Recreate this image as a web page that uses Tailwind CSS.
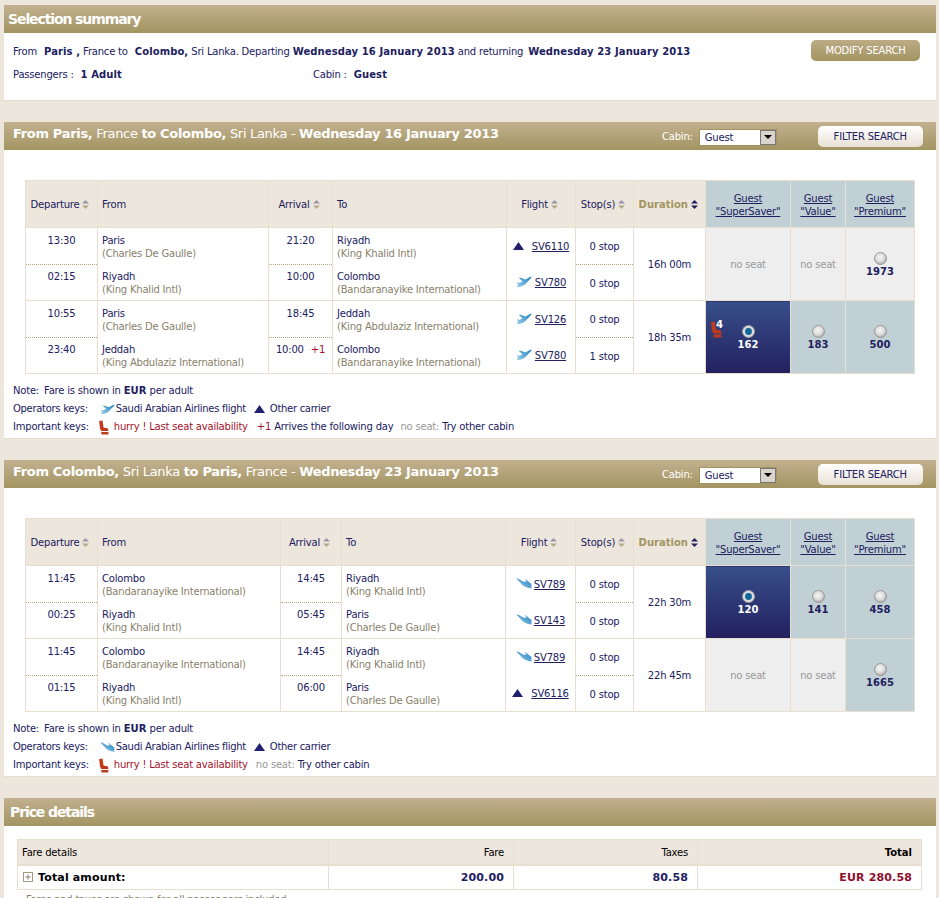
<!DOCTYPE html>
<html lang="en">
<head>
  <meta charset="UTF-8" />
  <title>Selection summary</title>
  <script src="https://cdn.jsdelivr.net/npm/@tailwindcss/browser@4"></script>
</head>
<body class="bg-[#ede6dc] h-[898px] overflow-hidden font-['DejaVu_Sans',sans-serif] text-[10px] leading-[13px] tracking-[-0.2px] text-[#20205f] [&_p_b]:tracking-[0.1px] [&_td.font-bold]:tracking-[0.1px]">
  <svg class="absolute w-0 h-0">
    <defs>
      <linearGradient id="planeFill" x1="0" y1="1" x2="1" y2="0">
        <stop offset="0" stop-color="#9fd0ea"/>
        <stop offset="1" stop-color="#1c7fc0"/>
      </linearGradient>
      <radialGradient id="radioOff" cx="0.45" cy="0.4" r="0.6">
        <stop offset="0" stop-color="#f6f6f6"/>
        <stop offset="0.6" stop-color="#dcdcdc"/>
        <stop offset="1" stop-color="#a8a8a8"/>
      </radialGradient>
    </defs>
    <symbol id="plane" viewBox="0 0 16 12"><path d="M0.5 10.5 C3 11.5 6 10.5 9 8.5 L15.5 1.5 C15.8 0.8 15 0.5 14 1 L9.5 3.5 L4 1.5 L3 2.2 L6.5 5.2 L3.5 7 L1.5 6.3 L0.8 6.8 L2.3 8.6 Z" fill="url(#planeFill)"/></symbol>
    <symbol id="planeBack" viewBox="0 0 16 12"><path d="M0.5 0.8 C1 0.3 2 0.5 3 1 L7.5 3.8 L11 3.6 L8.8 1.5 L10 1.5 L13.5 4.6 L15.5 6 L15.5 10.5 C13 10.5 10 9.5 7 7.5 Z" fill="url(#planeFill)"/></symbol>
    <symbol id="tri" viewBox="0 0 11 8"><path d="M5.5 0 L11 8 L0 8 Z" fill="#20206f"/></symbol>
    <symbol id="seat" viewBox="0 0 11 17"><path d="M0 1 L3.8 0.5 L5 8.5 L10 9.5 L10.5 12.5 L2.5 12.5 L1 10 Z M2.5 13.5 H10.5 V16.5 H2.5 Z" fill="#c0391b"/></symbol>
    <symbol id="sort" viewBox="0 0 7 9"><path d="M3.5 0 L7 3.5 L0 3.5 Z" fill="#9d97ad"/><path d="M0 5.5 L7 5.5 L3.5 9 Z" fill="#b5aa8a"/></symbol>
    <symbol id="sortOn" viewBox="0 0 7 9"><path d="M3.5 0 L7 3.5 L0 3.5 Z" fill="#20205f"/><path d="M0 5.5 L7 5.5 L3.5 9 Z" fill="#20205f"/></symbol>
    <symbol id="radio" viewBox="0 0 13 13"><circle cx="6.5" cy="6.5" r="6" fill="url(#radioOff)" stroke="#999"/></symbol>
    <symbol id="radioOn" viewBox="0 0 13 13"><circle cx="6.5" cy="6.5" r="6" fill="#dcdcdc" stroke="#a0a0a0"/><circle cx="6.5" cy="6.5" r="3.4" fill="#12679a"/></symbol>
  </svg>

  <div class="w-[932px] ml-[4px] pt-[5px]">

    <!-- Selection summary -->
    <section class="bg-white border-b border-[#e6dccc] mb-[21px]">
      <h2 class="h-[28px] bg-gradient-to-b from-[#c2b08f] to-[#a39562] flex items-center pl-[4px] text-white text-[14px] font-bold tracking-[-1.1px] first-letter:text-[18px]">Selection summary</h2>
      <div class="relative h-[67px] pl-[9px] pt-[12px]">
        <p class="h-[23px]">From <b class="ml-1">Paris ,</b> France to <b class="ml-1">Colombo,</b> Sri Lanka. Departing <b>Wednesday 16 January 2013</b> and returning <b class="ml-[2px]">Wednesday 23 January 2013</b></p>
        <div class="flex">
          <p class="w-[300px]">Passengers : <b class="ml-1">1 Adult</b></p>
          <p>Cabin : <b class="ml-1">Guest</b></p>
        </div>
        <button class="absolute left-[807px] top-[7px] w-[109px] h-[21px] rounded-[5px] bg-gradient-to-b from-[#bcab85] to-[#a39562] text-white">MODIFY SEARCH</button>
      </div>
    </section>

    <!-- Outbound -->
    <section class="bg-white border-b border-[#e6dccc] mb-[21px]">
      <div class="h-[28px] bg-gradient-to-b from-[#c2b08f] to-[#a39562] flex items-center pl-[9px] text-white">
        <h2 class="text-[13px] tracking-[-0.32px] w-[649px] mb-[6px]"><b>From Paris,</b> France <b>to Colombo,</b> Sri Lanka - <b>Wednesday 16 January 2013</b></h2>
        <span>Cabin:</span>
        <div class="ml-[6px] w-[78px] h-[17px] mt-[2px] bg-white border border-[#a39562] flex items-center justify-between pl-[5px] text-[#20205f]">Guest<span class="w-[16px] h-full bg-[#d9d5cc] border border-[#777] flex items-center justify-center"><span class="border-x-[4px] border-x-transparent border-t-[4px] border-t-black"></span></span></div>
        <button class="ml-[41px] w-[105px] h-[21px] rounded-[5px] bg-gradient-to-b from-white to-[#e8e0d4] text-[#20205f]">FILTER SEARCH</button>
      </div>
      <div class="pt-[30px] pl-[21px]">
        <table class="table-fixed border-collapse w-[889px]">
          <colgroup><col class="w-[72px]"/><col class="w-[171px]"/><col class="w-[64px]"/><col class="w-[174px]"/><col class="w-[69px]"/><col class="w-[58px]"/><col class="w-[72px]"/><col class="w-[85px]"/><col class="w-[55px]"/><col class="w-[69px]"/></colgroup>
          <thead>
            <tr class="h-[47px] bg-[#ede6dc] font-normal">
              <th class="border border-[#e8dfd0] font-normal pr-[3px]">Departure <svg class="inline w-[7px] h-[9px]"><use href="#sort"/></svg></th>
              <th class="border border-[#e8dfd0] font-normal text-left pl-1">From</th>
              <th class="border border-[#e8dfd0] font-normal pr-[3px]">Arrival <svg class="inline w-[7px] h-[9px]"><use href="#sort"/></svg></th>
              <th class="border border-[#e8dfd0] font-normal text-left pl-1">To</th>
              <th class="border border-[#e8dfd0] font-normal pr-[3px]">Flight <svg class="inline w-[7px] h-[9px]"><use href="#sort"/></svg></th>
              <th class="border border-[#e8dfd0] font-normal pr-[3px]">Stop(s) <svg class="inline w-[7px] h-[9px]"><use href="#sort"/></svg></th>
              <th class="border border-[#e8dfd0] font-bold tracking-normal text-[#a39562] pr-[2px]">Duration <svg class="inline w-[7px] h-[9px]"><use href="#sortOn"/></svg></th>
              <th class="border border-[#e8dfd0] font-normal bg-[#c1d0d4] underline pt-[2px]">Guest<br/>"SuperSaver"</th>
              <th class="border border-[#e8dfd0] font-normal bg-[#c1d0d4] underline pt-[2px]">Guest<br/>"Value"</th>
              <th class="border border-[#e8dfd0] font-normal bg-[#c1d0d4] underline pt-[2px]">Guest<br/>"Premium"</th>
            </tr>
          </thead>
          <tbody>
            <tr class="h-[37px]">
              <td class="border border-[#e8dfd0] border-b-[#b9a57e] [border-bottom-style:dotted] align-top pt-[6px] text-center">13:30</td>
              <td class="border border-[#e8dfd0] border-b-0 align-top pt-[6px] pl-1">Paris<br/><span class="text-[#8a7f6a]">(Charles De Gaulle)</span></td>
              <td class="border border-[#e8dfd0] border-b-[#b9a57e] [border-bottom-style:dotted] align-top pt-[6px] text-center">21:20</td>
              <td class="border border-[#e8dfd0] border-b-0 align-top pt-[6px] pl-1">Riyadh<br/><span class="text-[#8a7f6a]">(King Khalid Intl)</span></td>
              <td class="border border-[#e8dfd0] border-b-0"><div class="flex items-center justify-center gap-[8px]"><svg class="w-[11px] h-[8px]"><use href="#tri"/></svg><a class="underline">SV6110</a></div></td>
              <td class="border border-[#e8dfd0] border-b-[#b9a57e] [border-bottom-style:dotted] text-center">0 stop</td>
              <td rowspan="2" class="border border-[#e8dfd0] text-center">16h 00m</td>
              <td rowspan="2" class="border border-[#e8dfd0] bg-[#eeeeee] text-[#999] text-center">no seat</td>
              <td rowspan="2" class="border border-[#e8dfd0] bg-[#eeeeee] text-[#999] text-center">no seat</td>
              <td rowspan="2" class="border border-[#e8dfd0] bg-[#eeeeee] text-center font-bold pt-[2px]"><svg class="w-[13px] h-[13px] mx-auto"><use href="#radio"/></svg>1973</td>
            </tr>
            <tr class="h-[36px]">
              <td class="border border-[#e8dfd0] border-t-0 align-top pt-[5px] text-center">02:15</td>
              <td class="border border-[#e8dfd0] border-t-0 align-top pt-[5px] pl-1">Riyadh<br/><span class="text-[#8a7f6a]">(King Khalid Intl)</span></td>
              <td class="border border-[#e8dfd0] border-t-0 align-top pt-[5px] text-center">10:00</td>
              <td class="border border-[#e8dfd0] border-t-0 align-top pt-[5px] pl-1">Colombo<br/><span class="text-[#8a7f6a]">(Bandaranayike International)</span></td>
              <td class="border border-[#e8dfd0] border-t-0"><div class="flex items-center justify-center gap-[3px]"><svg class="w-[16px] h-[12px]"><use href="#plane"/></svg><a class="underline">SV780</a></div></td>
              <td class="border border-[#e8dfd0] border-t-0 pt-[1px] text-center">0 stop</td>
            </tr>
            <tr class="h-[37px]">
              <td class="border border-[#e8dfd0] border-b-[#b9a57e] [border-bottom-style:dotted] align-top pt-[6px] text-center">10:55</td>
              <td class="border border-[#e8dfd0] border-b-0 align-top pt-[6px] pl-1">Paris<br/><span class="text-[#8a7f6a]">(Charles De Gaulle)</span></td>
              <td class="border border-[#e8dfd0] border-b-[#b9a57e] [border-bottom-style:dotted] align-top pt-[6px] text-center">18:45</td>
              <td class="border border-[#e8dfd0] border-b-0 align-top pt-[6px] pl-1">Jeddah<br/><span class="text-[#8a7f6a]">(King Abdulaziz International)</span></td>
              <td class="border border-[#e8dfd0] border-b-0"><div class="flex items-center justify-center gap-[3px]"><svg class="w-[16px] h-[12px]"><use href="#plane"/></svg><a class="underline">SV126</a></div></td>
              <td class="border border-[#e8dfd0] border-b-[#b9a57e] [border-bottom-style:dotted] text-center">0 stop</td>
              <td rowspan="2" class="border border-[#e8dfd0] text-center">18h 35m</td>
              <td rowspan="2" class="relative border border-[#e8dfd0] bg-gradient-to-b from-[#364f8a] to-[#23205f] text-white text-center font-bold pt-[2px]">
                <svg class="absolute left-[5px] top-[20px] w-[11px] h-[17px]"><use href="#seat"/></svg>
                <span class="absolute left-[10px] top-[17px]">4</span>
                <svg class="w-[13px] h-[13px] mx-auto"><use href="#radioOn"/></svg>162
              </td>
              <td rowspan="2" class="border border-[#e8dfd0] bg-[#c1d0d4] text-center font-bold pt-[2px]"><svg class="w-[13px] h-[13px] mx-auto"><use href="#radio"/></svg>183</td>
              <td rowspan="2" class="border border-[#e8dfd0] bg-[#c1d0d4] text-center font-bold pt-[2px]"><svg class="w-[13px] h-[13px] mx-auto"><use href="#radio"/></svg>500</td>
            </tr>
            <tr class="h-[36px]">
              <td class="border border-[#e8dfd0] border-t-0 align-top pt-[5px] text-center">23:40</td>
              <td class="border border-[#e8dfd0] border-t-0 align-top pt-[5px] pl-1">Jeddah<br/><span class="text-[#8a7f6a]">(King Abdulaziz International)</span></td>
              <td class="border border-[#e8dfd0] border-t-0 align-top pt-[5px] text-center">10:00 <span class="ml-1 text-[#a3122a]">+1</span></td>
              <td class="border border-[#e8dfd0] border-t-0 align-top pt-[5px] pl-1">Colombo<br/><span class="text-[#8a7f6a]">(Bandaranayike International)</span></td>
              <td class="border border-[#e8dfd0] border-t-0"><div class="flex items-center justify-center gap-[3px]"><svg class="w-[16px] h-[12px]"><use href="#plane"/></svg><a class="underline">SV780</a></div></td>
              <td class="border border-[#e8dfd0] border-t-0 pt-[1px] text-center">1 stop</td>
            </tr>
          </tbody>
        </table>
      </div>
      <div class="pl-[9px] pt-[8px] pb-[2px] leading-[18px]">
        <p>Note: <span class="ml-[2px]">Fare is shown in <b>EUR</b> per adult</span></p>
        <p class="flex items-center tracking-[-0.3px]">Operators keys: <svg class="ml-[12px] mr-[1px] w-[15px] h-[11px]"><use href="#plane"/></svg>Saudi Arabian Airlines flight <svg class="ml-[8px] mr-[5px] w-[11px] h-[8px]"><use href="#tri"/></svg>Other carrier</p>
        <p class="flex items-center">Important keys: <svg class="ml-[10px] mr-[5px] w-[10px] h-[15px]"><use href="#seat"/></svg><span class="text-[#a3122a]">hurry ! Last seat availability</span><span class="ml-[9px] mr-[3px] text-[#a3122a]">+1</span>Arrives the following day<span class="ml-[7px] mr-[3px] text-[#999]">no seat:</span>Try other cabin</p>
      </div>
    </section>

    <!-- Return -->
    <section class="bg-white border-b border-[#e6dccc] mb-[21px]">
      <div class="h-[28px] bg-gradient-to-b from-[#c2b08f] to-[#a39562] flex items-center pl-[9px] text-white">
        <h2 class="text-[13px] tracking-[-0.32px] w-[649px] mb-[6px]"><b>From Colombo,</b> Sri Lanka <b>to Paris,</b> France - <b>Wednesday 23 January 2013</b></h2>
        <span>Cabin:</span>
        <div class="ml-[6px] w-[78px] h-[17px] mt-[2px] bg-white border border-[#a39562] flex items-center justify-between pl-[5px] text-[#20205f]">Guest<span class="w-[16px] h-full bg-[#d9d5cc] border border-[#777] flex items-center justify-center"><span class="border-x-[4px] border-x-transparent border-t-[4px] border-t-black"></span></span></div>
        <button class="ml-[41px] w-[105px] h-[21px] rounded-[5px] bg-gradient-to-b from-white to-[#e8e0d4] text-[#20205f]">FILTER SEARCH</button>
      </div>
      <div class="pt-[30px] pl-[21px]">
        <table class="table-fixed border-collapse w-[889px]">
          <colgroup><col class="w-[72px]"/><col class="w-[183px]"/><col class="w-[61px]"/><col class="w-[164px]"/><col class="w-[70px]"/><col class="w-[58px]"/><col class="w-[72px]"/><col class="w-[85px]"/><col class="w-[55px]"/><col class="w-[69px]"/></colgroup>
          <thead>
            <tr class="h-[47px] bg-[#ede6dc]">
              <th class="border border-[#e8dfd0] font-normal pr-[3px]">Departure <svg class="inline w-[7px] h-[9px]"><use href="#sort"/></svg></th>
              <th class="border border-[#e8dfd0] font-normal text-left pl-1">From</th>
              <th class="border border-[#e8dfd0] font-normal pr-[3px]">Arrival <svg class="inline w-[7px] h-[9px]"><use href="#sort"/></svg></th>
              <th class="border border-[#e8dfd0] font-normal text-left pl-1">To</th>
              <th class="border border-[#e8dfd0] font-normal pr-[3px]">Flight <svg class="inline w-[7px] h-[9px]"><use href="#sort"/></svg></th>
              <th class="border border-[#e8dfd0] font-normal pr-[3px]">Stop(s) <svg class="inline w-[7px] h-[9px]"><use href="#sort"/></svg></th>
              <th class="border border-[#e8dfd0] font-bold tracking-normal text-[#a39562] pr-[2px]">Duration <svg class="inline w-[7px] h-[9px]"><use href="#sortOn"/></svg></th>
              <th class="border border-[#e8dfd0] font-normal bg-[#c1d0d4] underline pt-[2px]">Guest<br/>"SuperSaver"</th>
              <th class="border border-[#e8dfd0] font-normal bg-[#c1d0d4] underline pt-[2px]">Guest<br/>"Value"</th>
              <th class="border border-[#e8dfd0] font-normal bg-[#c1d0d4] underline pt-[2px]">Guest<br/>"Premium"</th>
            </tr>
          </thead>
          <tbody>
            <tr class="h-[37px]">
              <td class="border border-[#e8dfd0] border-b-[#b9a57e] [border-bottom-style:dotted] align-top pt-[6px] text-center">11:45</td>
              <td class="border border-[#e8dfd0] border-b-0 align-top pt-[6px] pl-1">Colombo<br/><span class="text-[#8a7f6a]">(Bandaranayike International)</span></td>
              <td class="border border-[#e8dfd0] border-b-[#b9a57e] [border-bottom-style:dotted] align-top pt-[6px] text-center">14:45</td>
              <td class="border border-[#e8dfd0] border-b-0 align-top pt-[6px] pl-1">Riyadh<br/><span class="text-[#8a7f6a]">(King Khalid Intl)</span></td>
              <td class="border border-[#e8dfd0] border-b-0"><div class="flex items-center justify-center gap-[2px]"><svg class="w-[16px] h-[12px]"><use href="#planeBack"/></svg><a class="underline">SV789</a></div></td>
              <td class="border border-[#e8dfd0] border-b-[#b9a57e] [border-bottom-style:dotted] text-center">0 stop</td>
              <td rowspan="2" class="border border-[#e8dfd0] text-center">22h 30m</td>
              <td rowspan="2" class="border border-[#e8dfd0] bg-gradient-to-b from-[#364f8a] to-[#23205f] text-white text-center font-bold pt-[2px]"><svg class="w-[13px] h-[13px] mx-auto"><use href="#radioOn"/></svg>120</td>
              <td rowspan="2" class="border border-[#e8dfd0] bg-[#c1d0d4] text-center font-bold pt-[2px]"><svg class="w-[13px] h-[13px] mx-auto"><use href="#radio"/></svg>141</td>
              <td rowspan="2" class="border border-[#e8dfd0] bg-[#c1d0d4] text-center font-bold pt-[2px]"><svg class="w-[13px] h-[13px] mx-auto"><use href="#radio"/></svg>458</td>
            </tr>
            <tr class="h-[36px]">
              <td class="border border-[#e8dfd0] border-t-0 align-top pt-[5px] text-center">00:25</td>
              <td class="border border-[#e8dfd0] border-t-0 align-top pt-[5px] pl-1">Riyadh<br/><span class="text-[#8a7f6a]">(King Khalid Intl)</span></td>
              <td class="border border-[#e8dfd0] border-t-0 align-top pt-[5px] text-center">05:45</td>
              <td class="border border-[#e8dfd0] border-t-0 align-top pt-[5px] pl-1">Paris<br/><span class="text-[#8a7f6a]">(Charles De Gaulle)</span></td>
              <td class="border border-[#e8dfd0] border-t-0"><div class="flex items-center justify-center gap-[2px]"><svg class="w-[16px] h-[12px]"><use href="#planeBack"/></svg><a class="underline">SV143</a></div></td>
              <td class="border border-[#e8dfd0] border-t-0 pt-[1px] text-center">0 stop</td>
            </tr>
            <tr class="h-[37px]">
              <td class="border border-[#e8dfd0] border-b-[#b9a57e] [border-bottom-style:dotted] align-top pt-[6px] text-center">11:45</td>
              <td class="border border-[#e8dfd0] border-b-0 align-top pt-[6px] pl-1">Colombo<br/><span class="text-[#8a7f6a]">(Bandaranayike International)</span></td>
              <td class="border border-[#e8dfd0] border-b-[#b9a57e] [border-bottom-style:dotted] align-top pt-[6px] text-center">14:45</td>
              <td class="border border-[#e8dfd0] border-b-0 align-top pt-[6px] pl-1">Riyadh<br/><span class="text-[#8a7f6a]">(King Khalid Intl)</span></td>
              <td class="border border-[#e8dfd0] border-b-0"><div class="flex items-center justify-center gap-[2px]"><svg class="w-[16px] h-[12px]"><use href="#planeBack"/></svg><a class="underline">SV789</a></div></td>
              <td class="border border-[#e8dfd0] border-b-[#b9a57e] [border-bottom-style:dotted] text-center">0 stop</td>
              <td rowspan="2" class="border border-[#e8dfd0] text-center">22h 45m</td>
              <td rowspan="2" class="border border-[#e8dfd0] bg-[#eeeeee] text-[#999] text-center">no seat</td>
              <td rowspan="2" class="border border-[#e8dfd0] bg-[#eeeeee] text-[#999] text-center">no seat</td>
              <td rowspan="2" class="border border-[#e8dfd0] bg-[#c1d0d4] text-center font-bold pt-[2px]"><svg class="w-[13px] h-[13px] mx-auto"><use href="#radio"/></svg>1665</td>
            </tr>
            <tr class="h-[36px]">
              <td class="border border-[#e8dfd0] border-t-0 align-top pt-[5px] text-center">01:15</td>
              <td class="border border-[#e8dfd0] border-t-0 align-top pt-[5px] pl-1">Riyadh<br/><span class="text-[#8a7f6a]">(King Khalid Intl)</span></td>
              <td class="border border-[#e8dfd0] border-t-0 align-top pt-[5px] text-center">06:00</td>
              <td class="border border-[#e8dfd0] border-t-0 align-top pt-[5px] pl-1">Paris<br/><span class="text-[#8a7f6a]">(Charles De Gaulle)</span></td>
              <td class="border border-[#e8dfd0] border-t-0"><div class="flex items-center justify-center gap-[8px]"><svg class="w-[11px] h-[8px]"><use href="#tri"/></svg><a class="underline">SV6116</a></div></td>
              <td class="border border-[#e8dfd0] border-t-0 pt-[1px] text-center">0 stop</td>
            </tr>
          </tbody>
        </table>
      </div>
      <div class="pl-[9px] pt-[8px] pb-[2px] leading-[18px]">
        <p>Note: <span class="ml-[2px]">Fare is shown in <b>EUR</b> per adult</span></p>
        <p class="flex items-center tracking-[-0.3px]">Operators keys: <svg class="ml-[12px] mr-[1px] w-[15px] h-[11px]"><use href="#planeBack"/></svg>Saudi Arabian Airlines flight <svg class="ml-[8px] mr-[5px] w-[11px] h-[8px]"><use href="#tri"/></svg>Other carrier</p>
        <p class="flex items-center">Important keys: <svg class="ml-[10px] mr-[5px] w-[10px] h-[15px]"><use href="#seat"/></svg><span class="text-[#a3122a]">hurry ! Last seat availability</span><span class="ml-[8px] mr-[3px] text-[#999]">no seat:</span>Try other cabin</p>
      </div>
    </section>

    <!-- Price details -->
    <section class="bg-white">
      <h2 class="h-[28px] bg-gradient-to-b from-[#c2b08f] to-[#a39562] flex items-center pl-[6px] text-white text-[14px] font-bold tracking-[-1.1px] first-letter:text-[18px]">Price details</h2>
      <div class="pt-[13px] pl-[13px]">
        <table class="table-fixed border-collapse w-[904px]">
          <colgroup><col class="w-[311px]"/><col class="w-[185px]"/><col class="w-[184px]"/><col class="w-[224px]"/></colgroup>
          <thead>
            <tr class="h-[25px] bg-[#ede6dc]">
              <th class="border border-[#e8dfd0] border-b-2 font-normal text-left pl-[4px] pt-[1px] text-black">Fare details</th>
              <th class="border border-[#e8dfd0] border-b-2 font-normal text-right pr-[9px] pt-[1px] text-black">Fare</th>
              <th class="border border-[#e8dfd0] border-b-2 font-normal text-right pr-[9px] pt-[1px] text-black">Taxes</th>
              <th class="border border-[#e8dfd0] border-b-2 font-bold tracking-normal text-right pr-[9px] pt-[1px] text-black">Total</th>
            </tr>
          </thead>
          <tbody>
            <tr class="h-[25px] text-[11px] tracking-[0.15px] font-bold">
              <td class="border border-[#e8dfd0] pl-[5px] pt-[1px] text-black"><span class="inline-flex items-center gap-[5px]"><svg class="w-[10px] h-[10px]" viewBox="0 0 10 10"><rect x="0.5" y="0.5" width="9" height="9" fill="none" stroke="#a39a80"/><path d="M2.5 5 H7.5 M5 2.5 V7.5" stroke="#8a7f6a"/></svg>Total amount:</span></td>
              <td class="border border-[#e8dfd0] text-right pr-[9px] pt-[1px]">200.00</td>
              <td class="border border-[#e8dfd0] text-right pr-[9px] pt-[1px]">80.58</td>
              <td class="border border-[#e8dfd0] text-right pr-[9px] pt-[1px] text-[#8e0f2a]">EUR 280.58</td>
            </tr>
          </tbody>
        </table>
      </div>
      <p class="pt-[3px] pl-[22px] text-[#8a7f6a]">Fares and taxes are shown for all passengers included</p>
    </section>
  </div>
</body>
</html>
